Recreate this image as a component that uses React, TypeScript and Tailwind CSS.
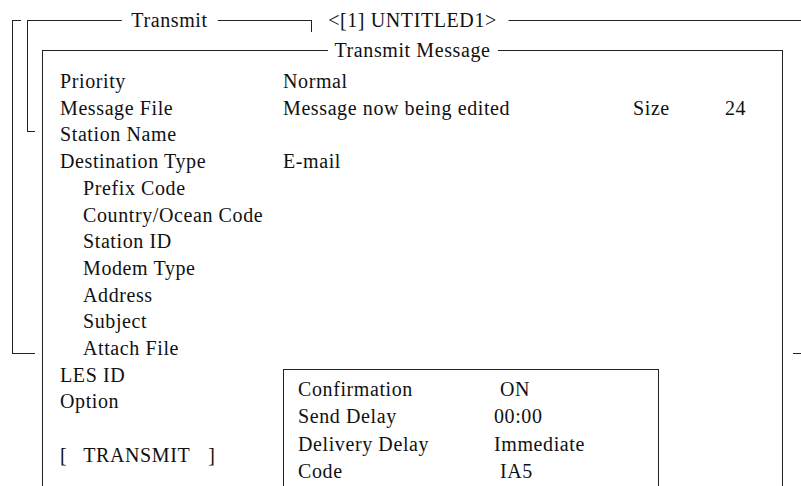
const rows: { label: string; indent?: boolean; value?: string }[] = [
  { label: "Priority", value: "Normal" },
  { label: "Message File", value: "Message now being edited" },
  { label: "Station Name" },
  { label: "Destination Type", value: "E-mail" },
  { label: "Prefix Code", indent: true },
  { label: "Country/Ocean Code", indent: true },
  { label: "Station ID", indent: true },
  { label: "Modem Type", indent: true },
  { label: "Address", indent: true },
  { label: "Subject", indent: true },
  { label: "Attach File", indent: true },
  { label: "LES ID" },
  { label: "Option" },
];

const options: { label: string; value: string; nudge?: boolean }[] = [
  { label: "Confirmation", value: "ON", nudge: true },
  { label: "Send Delay", value: "00:00" },
  { label: "Delivery Delay", value: "Immediate" },
  { label: "Code", value: "IA5", nudge: true },
];

function Title({ text, pad = "px-[10px]" }: { text: string; pad?: string }) {
  return (
    <span
      className={`absolute left-1/2 top-[-1px] -translate-x-1/2 -translate-y-1/2 whitespace-nowrap bg-white leading-none ${pad}`}
    >
      {text}
    </span>
  );
}

export default function App() {
  return (
    <div className="relative h-[486px] w-[801px] overflow-hidden bg-white font-[family-name:Liberation_Serif,Times_New_Roman,serif] text-[20px] tracking-[0.6px] text-[#111]">
      {/* back window */}
      <div className="absolute left-[12px] top-[20px] h-[334px] w-[801px] border border-[#222]">
        <Title text="<[1] UNTITLED1>" pad="px-[12px]" />
      </div>

      {/* Transmit window */}
      <div className="absolute left-[27px] top-[20px] h-[112px] w-[285px] border border-[#222] bg-white shadow-[0_0_0_6px_white]">
        <Title text="Transmit" />
      </div>

      {/* Transmit Message window, white margin hides what lies behind */}
      <div className="absolute left-[35px] top-[32px] w-[758px] bg-white pl-[7px] pr-[10px] pt-[18px]">
        <div className="relative h-[460px] border border-[#222] pl-[17px] pt-[17px]">
          <Title text="Transmit Message" pad="px-[7px]" />

          <div className="leading-[26.7px]">
            {rows.map((r) => (
              <div key={r.label} className="flex">
                <div className={`w-[223px] shrink-0 ${r.indent ? "pl-[23px]" : ""}`}>{r.label}</div>
                {r.label === "Message File" ? (
                  <>
                    <div className="w-[350px] shrink-0">{r.value}</div>
                    <div className="w-[92px] shrink-0">Size</div>
                    <div>24</div>
                  </>
                ) : (
                  <div>{r.value}</div>
                )}
              </div>
            ))}
            <div className="h-[26.7px]" />
            <div className="flex">
              <span>[</span>
              <span className="ml-[16px]">TRANSMIT</span>
              <span className="ml-[18px]">]</span>
            </div>
          </div>

          {/* option popup */}
          <div className="absolute left-[240px] top-[318px] h-[200px] w-[376px] border border-[#222] bg-white pl-[14px] pt-[6px] leading-[27.3px]">
            {options.map((o) => (
              <div key={o.label} className="flex">
                <div className="w-[196px] shrink-0">{o.label}</div>
                <div className={o.nudge ? "pl-[6px]" : ""}>{o.value}</div>
              </div>
            ))}
          </div>
        </div>
      </div>
    </div>
  );
}
